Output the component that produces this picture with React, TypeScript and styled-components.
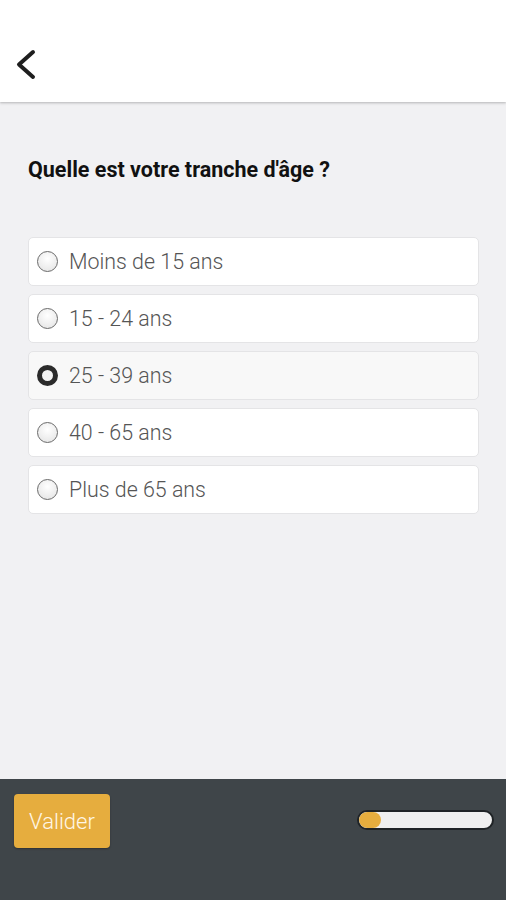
import React, { useState } from 'react';
import styled, { createGlobalStyle } from 'styled-components';

const GlobalStyle = createGlobalStyle`
  html, body {
    margin: 0;
    padding: 0;
    height: 100%;
    background: #f1f1f3;
  }
  #root {
    height: 100%;
  }
  * {
    box-sizing: border-box;
  }
`;

const options = ['Moins de 15 ans', '15 - 24 ans', '25 - 39 ans', '40 - 65 ans', 'Plus de 65 ans'];

const App = () => {
  const [selected, setSelected] = useState(2);

  return (
    <>
      <GlobalStyle />
      <Page>
        <Header>
          <BackButton aria-label="Retour">
            <svg width="24" height="31" viewBox="0 0 24 31" fill="none">
              <path d="M19 3 L5 15.5 L19 28" stroke="#1e1e1e" strokeWidth="4" strokeLinecap="round" strokeLinejoin="round" />
            </svg>
          </BackButton>
        </Header>

        <Content>
          <Question>Quelle est votre tranche d'âge ?</Question>

          <OptionList>
            {options.map((label, i) => (
              <OptionCard key={label} active={i === selected} onClick={() => setSelected(i)}>
                <Radio checked={i === selected} />
                <OptionLabel>{label}</OptionLabel>
              </OptionCard>
            ))}
          </OptionList>
        </Content>

        <Footer>
          <ValidateButton>Valider</ValidateButton>
          <Progress>
            <ProgressFill style={{ width: `${(1 / 6) * 100}%` }} />
          </Progress>
        </Footer>
      </Page>
    </>
  );
};

const Page = styled.div`
  display: flex;
  flex-direction: column;
  height: 900px;
  background: #f1f1f3;
  font-family: Roboto, 'Liberation Sans', sans-serif;
`;

const Header = styled.div`
  height: 102px;
  background: #ffffff;
  display: flex;
  align-items: center;
  padding: 26px 0 0 14px;
  box-shadow: 0 1px 2px rgba(0, 0, 0, 0.18), 0 2px 3px rgba(0, 0, 0, 0.06);
  position: relative;
  z-index: 1;
`;

const BackButton = styled.button`
  border: none;
  background: none;
  padding: 0;
  display: flex;
  cursor: pointer;
`;

const Content = styled.div`
  flex: 1;
  padding: 54px 27px 0 28px;
`;

const Question = styled.div`
  font-size: 21.5px;
  font-weight: 700;
  color: #111;
  line-height: 28px;
`;

const OptionList = styled.div`
  margin-top: 53px;
  display: flex;
  flex-direction: column;
  gap: 8px;
`;

const OptionCard = styled.div<{ active: boolean }>`
  height: 49px;
  display: flex;
  align-items: center;
  gap: 11px;
  padding-left: 8px;
  background: ${(p) => (p.active ? '#f8f8f8' : '#ffffff')};
  border: 1px solid #e4e4e6;
  border-radius: 5px;
  cursor: pointer;
`;

const Radio = styled.span<{ checked: boolean }>`
  width: 21px;
  height: 21px;
  border-radius: 50%;
  flex-shrink: 0;
  border: ${(p) => (p.checked ? '5px solid #2b2b2b' : '1px solid #6a6a6a')};
  background: ${(p) =>
    p.checked ? '#f4f4f4' : 'radial-gradient(circle at 50% 35%, #ffffff, #e2e2e2)'};
`;

const OptionLabel = styled.span`
  font-size: 21.4px;
  font-weight: 300;
  color: #555;
`;

const Footer = styled.div`
  height: 121px;
  background: #3f4549;
  display: flex;
  align-items: flex-start;
  justify-content: space-between;
  padding: 15px 12px 0 14px;
`;

const ValidateButton = styled.button`
  width: 96px;
  height: 54px;
  border: none;
  border-radius: 4px;
  background: #e6ad3e;
  color: #fff6e6;
  font-family: Roboto, 'Liberation Sans', sans-serif;
  font-size: 22px;
  font-weight: 300;
  padding: 0;
  box-shadow: 0 1px 2px rgba(0, 0, 0, 0.3);
  cursor: pointer;
`;

const Progress = styled.div`
  margin-top: 16px;
  width: 137px;
  height: 20px;
  border-radius: 10px;
  background: #efefef;
  border: 2px solid #1f2326;
  overflow: hidden;
`;

const ProgressFill = styled.div`
  height: 100%;
  background: #e6ad3e;
  border-radius: 10px;
`;

export default App;
